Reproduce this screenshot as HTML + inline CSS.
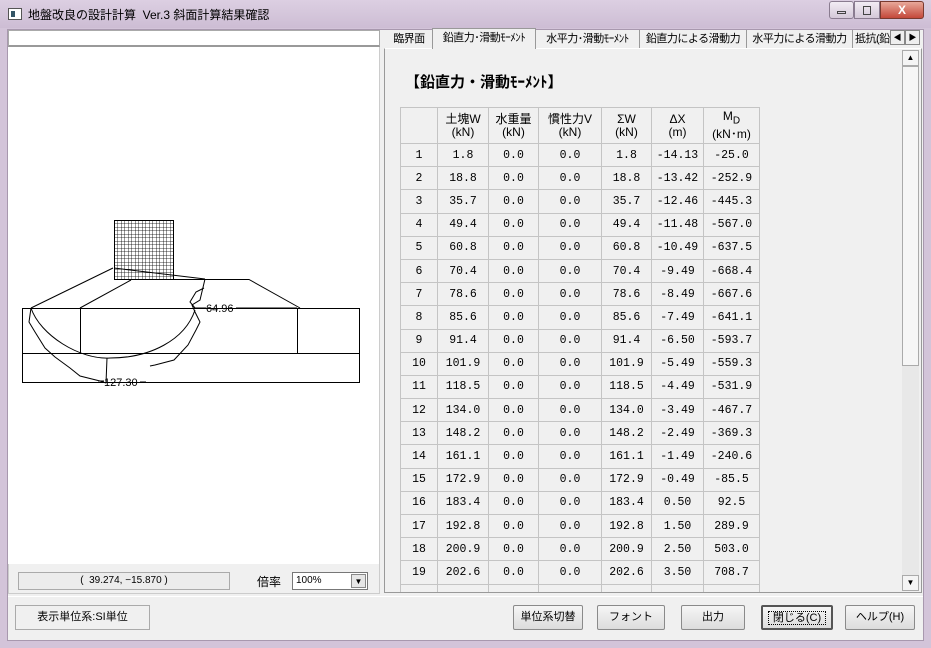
<!DOCTYPE html>
<html><head><meta charset="utf-8"><style>
*{margin:0;padding:0;box-sizing:border-box}
body{width:931px;height:648px;overflow:hidden;background:#d3c4d9;font-family:"Liberation Sans","Noto Sans CJK JP",sans-serif;font-size:12px;color:#000;position:relative}
.a{position:absolute}
#title{left:0;top:0;width:931px;height:28px;background:linear-gradient(#dccfe2,#cdbdd4)}
#client{left:7px;top:29px;width:917px;height:612px;background:#f0f0f0;border:1px solid #a898ae}
.btn{position:absolute;top:605px;height:25px;border:1px solid #8a8a8a;border-radius:2px;background:linear-gradient(#f6f6f6,#dcdcdc);text-align:center;line-height:23px;font-size:11px}
table{border-collapse:collapse;position:absolute;left:400px;top:107px;font-family:"Liberation Mono","Noto Sans CJK JP",monospace;font-size:11.5px}
td{border:1px solid #c4c4c4;height:23.2px;text-align:center;padding:0;background:#f0f0f0}
.h td{height:36px;line-height:13px;font-family:"Liberation Sans","Noto Sans CJK JP",sans-serif;font-size:12px}
.tab{position:absolute;top:30px;height:18px;font-size:11px;line-height:18px;border-right:1px solid #9a9a9a;background:#f0f0f0;text-align:center;white-space:nowrap;overflow:hidden;letter-spacing:-0.5px}
</style></head><body>
<div id="title" class="a"></div>
<div class="a" style="left:8px;top:8px;width:14px;height:12px;border:1px solid #555;background:#fff"><div style="margin:2px;width:4px;height:6px;background:#356"></div></div>
<div class="a" style="left:28px;top:6px;font-size:12px">地盤改良の設計計算 &nbsp;Ver.3 斜面計算結果確認</div>
<div class="a" style="left:829px;top:1px;width:25px;height:18px;border:1px solid #8a7c90;border-radius:3px;background:linear-gradient(#f2ecf4,#d4c8d8)"><div style="margin:9px 7px;height:3px;border:1px solid #444"></div></div>
<div class="a" style="left:854px;top:1px;width:26px;height:18px;border:1px solid #8a7c90;background:linear-gradient(#f2ecf4,#d4c8d8)"><div style="margin:4px 8px;height:9px;border:1px solid #444"></div></div>
<div class="a" style="left:880px;top:1px;width:44px;height:18px;border:1px solid #7a3a30;border-radius:0 3px 3px 0;background:linear-gradient(#e8a89a,#c4483a);color:#fff;font-weight:bold;text-align:center;line-height:17px">X</div>
<div id="client" class="a"></div>
<!-- left panel -->
<div class="a" style="left:8px;top:30px;width:372px;height:17px;background:#fff;border:1px solid #aaa;border-bottom:2px solid #999"></div>
<div class="a" style="left:8px;top:47px;width:372px;height:517px;background:#fff;border-right:1px solid #ccc"></div>
<div class="a" style="left:8px;top:564px;width:372px;height:30px;border:1px solid #ccc;border-top:none"></div>
<svg class="a" style="left:0;top:0" width="380" height="400" fill="none" stroke="#000" stroke-width="1">
<defs><pattern id="g" width="3.5" height="3.5" patternUnits="userSpaceOnUse" x="114" y="220"><path d="M0 0H3.5M0 0V3.5" stroke="#000" stroke-width=".8"/></pattern></defs>
<rect x="114.5" y="220.5" width="59" height="59" fill="url(#g)"/>
<rect x="22.5" y="308.5" width="337" height="74"/>
<path d="M22 353.5H359M80.5 308V353M297.5 308V353"/>
<path d="M31 308L113 268M80 308L131 280M174 279.5H249L300 308M114 268L205 279"/>
<path d="M31 308C40 335 80 360 110 358C150 358 185 340 195 310"/>
<path d="M31 308L29 322L35 332L45 348L55 357L70 368L80 376L100 381L106 383M106 383L107 358"/>
<path d="M205 279L200 300L192 305L195 312L200 322L196 330L188 345L174 360L155 365L150 366"/>
<path d="M204 288L196 292L190 302L195 308"/>
<text x="206" y="312" fill="#000" stroke="none" font-size="11" font-family="Liberation Sans">64.96</text>
<text x="104" y="386" fill="#000" stroke="none" font-size="11" font-family="Liberation Sans">127.30</text>
<path d="M195 308H206M236 308H297M98 381H104M140 382H146"/>
</svg>
<div class="a" style="left:18px;top:572px;width:212px;height:18px;border:1px solid #aaa;background:#ececec;font-size:10px;text-align:center;line-height:16px">( &nbsp;39.274, −15.870 )</div>
<div class="a" style="left:257px;top:573px;font-size:12px">倍率</div>
<div class="a" style="left:292px;top:572px;width:76px;height:18px;border:1px solid #777;background:#fff;font-size:10px;line-height:16px;padding-left:3px">100%</div>
<div class="a" style="left:351px;top:574px;width:15px;height:14px;border:1px solid #888;background:#e6e6e6;font-size:8px;text-align:center;line-height:13px">▼</div>
<!-- tabs -->
<div class="a" style="left:384px;top:48px;width:538px;height:545px;border:1px solid #999;border-top:1px solid #fff;background:#f0f0f0"></div>
<div class="tab" style="left:387px;width:44px;border:none">臨界面</div>
<div class="tab" style="left:432px;top:28px;height:21px;width:104px;background:#f0f0f0;border:1px solid #999;border-bottom:none">鉛直力･滑動ﾓｰﾒﾝﾄ</div>
<div class="tab" style="left:536px;width:104px">水平力･滑動ﾓｰﾒﾝﾄ</div>
<div class="tab" style="left:640px;width:107px">鉛直力による滑動力</div>
<div class="tab" style="left:747px;width:106px">水平力による滑動力</div>
<div class="tab" style="left:855px;width:35px;border:none;text-align:left">抵抗(鉛</div>
<div class="a" style="left:890px;top:30px;width:15px;height:15px;border:1px solid #888;background:#eee;font-size:8px;text-align:center;line-height:13px">◀</div>
<div class="a" style="left:905px;top:30px;width:15px;height:15px;border:1px solid #888;background:#eee;font-size:8px;text-align:center;line-height:13px">▶</div>
<!-- scrollbar -->
<div class="a" style="left:902px;top:50px;width:17px;height:541px;background:#e8e8e8"></div>
<div class="a" style="left:902px;top:50px;width:17px;height:16px;border:1px solid #aaa;background:#f4f4f4;font-size:8px;text-align:center;line-height:14px">▲</div>
<div class="a" style="left:902px;top:66px;width:17px;height:300px;border:1px solid #aaa;background:#f6f6f6"></div>
<div class="a" style="left:902px;top:575px;width:17px;height:16px;border:1px solid #aaa;background:#f4f4f4;font-size:8px;text-align:center;line-height:14px">▼</div>
<div class="a" style="left:405px;top:71px;font-size:15px;font-weight:bold">【鉛直力・滑動ﾓｰﾒﾝﾄ】</div>
<div class="a" style="left:400px;top:107px;width:360px;height:485px;overflow:hidden">
<table style="left:0;top:0">
<colgroup><col width="37"><col width="51"><col width="50"><col width="63"><col width="50"><col width="52"><col width="56"></colgroup>
<tr class="h"><td></td><td>土塊W<br>(kN)</td><td>水重量<br>(kN)</td><td>慣性力V<br>(kN)</td><td>ΣW<br>(kN)</td><td>ΔX<br>(m)</td><td>M<sub>D</sub><br>(kN･m)</td></tr>
<tr><td>1</td><td>1.8</td><td>0.0</td><td>0.0</td><td>1.8</td><td>-14.13</td><td>-25.0</td></tr>
<tr><td>2</td><td>18.8</td><td>0.0</td><td>0.0</td><td>18.8</td><td>-13.42</td><td>-252.9</td></tr>
<tr><td>3</td><td>35.7</td><td>0.0</td><td>0.0</td><td>35.7</td><td>-12.46</td><td>-445.3</td></tr>
<tr><td>4</td><td>49.4</td><td>0.0</td><td>0.0</td><td>49.4</td><td>-11.48</td><td>-567.0</td></tr>
<tr><td>5</td><td>60.8</td><td>0.0</td><td>0.0</td><td>60.8</td><td>-10.49</td><td>-637.5</td></tr>
<tr><td>6</td><td>70.4</td><td>0.0</td><td>0.0</td><td>70.4</td><td>-9.49</td><td>-668.4</td></tr>
<tr><td>7</td><td>78.6</td><td>0.0</td><td>0.0</td><td>78.6</td><td>-8.49</td><td>-667.6</td></tr>
<tr><td>8</td><td>85.6</td><td>0.0</td><td>0.0</td><td>85.6</td><td>-7.49</td><td>-641.1</td></tr>
<tr><td>9</td><td>91.4</td><td>0.0</td><td>0.0</td><td>91.4</td><td>-6.50</td><td>-593.7</td></tr>
<tr><td>10</td><td>101.9</td><td>0.0</td><td>0.0</td><td>101.9</td><td>-5.49</td><td>-559.3</td></tr>
<tr><td>11</td><td>118.5</td><td>0.0</td><td>0.0</td><td>118.5</td><td>-4.49</td><td>-531.9</td></tr>
<tr><td>12</td><td>134.0</td><td>0.0</td><td>0.0</td><td>134.0</td><td>-3.49</td><td>-467.7</td></tr>
<tr><td>13</td><td>148.2</td><td>0.0</td><td>0.0</td><td>148.2</td><td>-2.49</td><td>-369.3</td></tr>
<tr><td>14</td><td>161.1</td><td>0.0</td><td>0.0</td><td>161.1</td><td>-1.49</td><td>-240.6</td></tr>
<tr><td>15</td><td>172.9</td><td>0.0</td><td>0.0</td><td>172.9</td><td>-0.49</td><td>-85.5</td></tr>
<tr><td>16</td><td>183.4</td><td>0.0</td><td>0.0</td><td>183.4</td><td>0.50</td><td>92.5</td></tr>
<tr><td>17</td><td>192.8</td><td>0.0</td><td>0.0</td><td>192.8</td><td>1.50</td><td>289.9</td></tr>
<tr><td>18</td><td>200.9</td><td>0.0</td><td>0.0</td><td>200.9</td><td>2.50</td><td>503.0</td></tr>
<tr><td>19</td><td>202.6</td><td>0.0</td><td>0.0</td><td>202.6</td><td>3.50</td><td>708.7</td></tr>
<tr><td></td><td></td><td></td><td></td><td></td><td></td><td></td></tr>
</table></div>
<!-- bottom -->
<div class="a" style="left:8px;top:596px;width:915px;height:1px;background:#fff"></div>
<div class="btn" style="left:15px;width:135px;border-radius:0;background:#f0f0f0;border-color:#aaa">表示単位系:SI単位</div>
<div class="btn" style="left:513px;width:70px">単位系切替</div>
<div class="btn" style="left:597px;width:68px">フォント</div>
<div class="btn" style="left:681px;width:64px">出力</div>
<div class="btn" style="left:761px;width:72px;border:2px solid #555"><span style="border:1px dotted #000;padding:0 4px">閉じる(C)</span></div>
<div class="btn" style="left:845px;width:70px">ヘルプ(H)</div>
</body></html>
